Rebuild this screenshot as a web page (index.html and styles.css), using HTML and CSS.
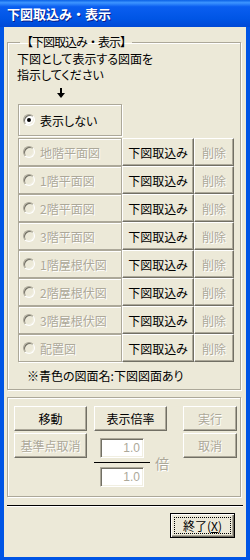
FILE: index.html
```html
<!DOCTYPE html>
<html lang="ja">
<head>
    <meta charset="UTF-8">
    <meta name="viewport" content="width=device-width, initial-scale=1.0">
    <title>下図取込み・表示</title>
    <link rel="stylesheet" href="styles.css">
</head>
<body>

    <div class="window">
        <div class="titlebar">下図取込み・表示</div>

        <div class="client">
            <fieldset class="group group-load">
                <legend>【下図取込み・表示】</legend>
                <p class="hint">下図として表示する図面を<br>指示してください</p>
                <svg class="arrow" width="8" height="10" viewBox="0 0 8 10">
                    <rect x="3" y="0" width="2" height="6" fill="#000"/>
                    <polygon points="0,5 8,5 4,10" fill="#000"/>
                </svg>

                <div class="cell cell-none"><span class="radio checked"></span>表示しない</div>

                <div class="rows">
                    <div class="row">
                        <div class="cell disabled"><span class="radio"></span>地階平面図</div>
                        <button class="btn btn-load">下図取込み</button>
                        <button class="btn btn-del" disabled>削除</button>
                    </div>
                    <div class="row">
                        <div class="cell disabled"><span class="radio"></span>1階平面図</div>
                        <button class="btn btn-load">下図取込み</button>
                        <button class="btn btn-del" disabled>削除</button>
                    </div>
                    <div class="row">
                        <div class="cell disabled"><span class="radio"></span>2階平面図</div>
                        <button class="btn btn-load">下図取込み</button>
                        <button class="btn btn-del" disabled>削除</button>
                    </div>
                    <div class="row">
                        <div class="cell disabled"><span class="radio"></span>3階平面図</div>
                        <button class="btn btn-load">下図取込み</button>
                        <button class="btn btn-del" disabled>削除</button>
                    </div>
                    <div class="row">
                        <div class="cell disabled"><span class="radio"></span>1階屋根伏図</div>
                        <button class="btn btn-load">下図取込み</button>
                        <button class="btn btn-del" disabled>削除</button>
                    </div>
                    <div class="row">
                        <div class="cell disabled"><span class="radio"></span>2階屋根伏図</div>
                        <button class="btn btn-load">下図取込み</button>
                        <button class="btn btn-del" disabled>削除</button>
                    </div>
                    <div class="row">
                        <div class="cell disabled"><span class="radio"></span>3階屋根伏図</div>
                        <button class="btn btn-load">下図取込み</button>
                        <button class="btn btn-del" disabled>削除</button>
                    </div>
                    <div class="row">
                        <div class="cell disabled"><span class="radio"></span>配置図</div>
                        <button class="btn btn-load">下図取込み</button>
                        <button class="btn btn-del" disabled>削除</button>
                    </div>
                </div>

                <p class="note">※青色の図面名:下図図面あり</p>
            </fieldset>

            <fieldset class="group group-view">
                <div class="col col-left">
                    <button class="btn btn-wide">移動</button>
                    <button class="btn btn-wide" disabled>基準点取消</button>
                </div>
                <div class="col col-mid">
                    <button class="btn btn-wide">表示倍率</button>
                    <div class="frac">
                        <div class="frac-stack">
                            <input class="field" type="text" value="1.0" disabled>
                            <div class="frac-line"></div>
                            <input class="field" type="text" value="1.0" disabled>
                        </div>
                        <span class="frac-unit">倍</span>
                    </div>
                </div>
                <div class="col col-right">
                    <button class="btn btn-small" disabled>実行</button>
                    <button class="btn btn-small" disabled>取消</button>
                </div>
            </fieldset>

            <div class="separator"></div>

            <div class="footer">
                <button class="btn btn-default"><span class="focus">終了(<u>X</u>)</span></button>
            </div>
        </div>
    </div>

</body>
</html>
```

FILE: styles.css
```css
* {
    box-sizing: border-box;
}

body {
    margin: 0;
    font-family: "Noto Sans CJK JP", sans-serif;
    font-size: 12px;
    font-feature-settings: "palt";
    color: #000;
}

.window {
    width: 250px;
    height: 560px;
    display: flex;
    flex-direction: column;
    background-color: #0055e5;
}

.titlebar {
    height: 27px;
    padding-left: 7px;
    line-height: 27px;
    font-size: 13px;
    font-weight: bold;
    font-feature-settings: normal;
    color: #fff;
    text-shadow: 1px 1px 0 #0a1d8a;
    background: linear-gradient(to bottom, #0a61e6 0%, #3d95ff 10%, #0a5ef0 25%, #0055e5 70%, #0049d6 100%);
}

.client {
    flex: 1;
    margin: 0 4px 3px;
    padding: 8px 5px 0 3px;
    background-color: #ece9d8;
}

/* group boxes */

.group {
    margin: 0;
    min-width: 0;
    border: 1px solid #aca899;
    box-shadow: inset 1px 1px 0 #fff, 1px 1px 0 #fff;
}

.group legend {
    margin-left: 2px;
    padding: 0 1px;
    line-height: 14px;
    font-feature-settings: normal;
    letter-spacing: -1px;
}

.group-load {
    padding: 0 6px 6px 10px;
}

.hint {
    margin: 2px 0 0 -1px;
    line-height: 16px;
}

.arrow {
    display: block;
    margin: 5px 0 0 39px;
}

.cell {
    display: flex;
    align-items: center;
    width: 104px;
    padding-left: 4px;
    border: 1px solid #aca899;
    box-shadow: inset 1px 1px 0 #fff, 1px 1px 0 #fff;
}

.cell-none {
    height: 32px;
    margin-top: 6px;
}

.cell.disabled {
    color: #aca899;
    text-shadow: 1px 1px 0 #fff;
}

.radio {
    position: relative;
    width: 12px;
    height: 12px;
    margin-right: 5px;
    border-radius: 50%;
    border: 1px solid;
    border-color: #aca899 #fff #fff #aca899;
    box-shadow: inset 1px 1px 0 #716f64, inset -1px -1px 0 #f1efe2;
    background-color: #fff;
}

.disabled .radio {
    background-color: #ece9d8;
}

.radio.checked::after {
    content: "";
    position: absolute;
    left: 3px;
    top: 3px;
    width: 4px;
    height: 4px;
    border-radius: 50%;
    background-color: #000;
}

.rows {
    margin-top: 2px;
}

.row {
    display: flex;
    height: 28px;
}

.row .cell {
    height: 28px;
}

.note {
    margin: 6px 0 0 9px;
    line-height: 15px;
}

/* buttons */

.btn {
    padding: 0;
    font-family: inherit;
    font-size: 12px;
    font-feature-settings: "palt";
    color: #000;
    background-color: #ece9d8;
    border: 1px solid;
    border-color: #fff #716f64 #716f64 #fff;
    box-shadow: inset -1px -1px 0 #aca899;
    cursor: pointer;
}

.btn:disabled {
    color: #aca899;
    text-shadow: 1px 1px 0 #fff;
    cursor: default;
}

.btn-load {
    width: 72px;
    height: 28px;
}

.btn-del {
    width: 40px;
    height: 28px;
}

.group-view {
    display: flex;
    margin-top: 7px;
    padding: 8px 6px 9px;
}

.col {
    display: flex;
    flex-direction: column;
    gap: 2px;
}

.col-left {
    margin-right: 7px;
}

.col-right {
    margin-left: 14px;
}

.btn-wide {
    width: 73px;
    height: 25px;
}

.btn-small {
    width: 54px;
    height: 25px;
}

.frac {
    display: flex;
    align-items: center;
    margin-top: 5px;
}

.frac-stack {
    display: flex;
    flex-direction: column;
    align-items: center;
    width: 56px;
}

.field {
    width: 44px;
    height: 20px;
    padding: 0 3px 0 0;
    font-family: "Liberation Sans", sans-serif;
    font-size: 12px;
    text-align: right;
    color: #aca899;
    background-color: #fff;
    border: 1px solid;
    border-color: #aca899 #fff #fff #aca899;
    box-shadow: inset 1px 1px 0 #716f64, inset -1px -1px 0 #f1efe2;
}

.frac-line {
    width: 56px;
    height: 1px;
    margin: 4px 0;
    background-color: #000;
}

.frac-unit {
    margin-left: 5px;
    font-size: 14px;
    color: #aca899;
    text-shadow: 1px 1px 0 #fff;
}

/* footer */

.separator {
    height: 2px;
    margin: 8px -2px 0 0;
    border-top: 1px solid #000;
    border-bottom: 1px solid #fff;
}

.footer {
    display: flex;
    justify-content: flex-end;
    margin-top: 6px;
    padding-right: 6px;
}

.btn-default {
    width: 65px;
    height: 25px;
    padding: 3px;
    border: 1px solid #000;
    box-shadow: inset 1px 1px 0 #fff, inset -1px -1px 0 #716f64, inset -2px -2px 0 #aca899;
}

.btn-default .focus {
    display: block;
    height: 100%;
    line-height: 15px;
    border: 1px dotted #000;
}
```
